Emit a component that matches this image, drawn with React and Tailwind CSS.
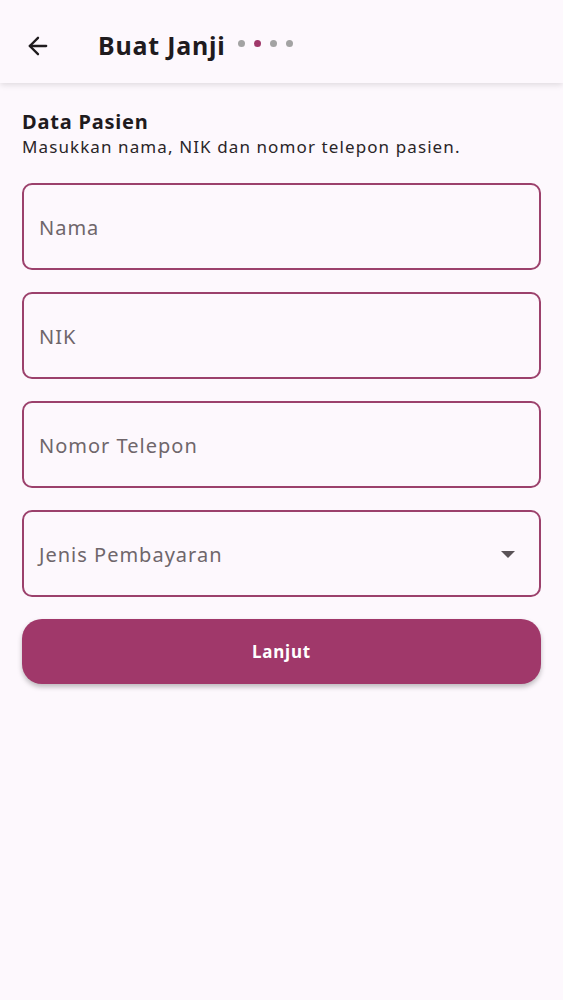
import { ArrowLeft } from 'lucide-react';

const fields = ['Nama', 'NIK', 'Nomor Telepon'];

export default function App() {
  return (
    <div className="min-h-[1000px] w-full bg-[#fdf8fd] font-['Noto_Sans',sans-serif] text-[#1f1b1e]">
      {/* Header */}
      <div className="flex h-[83px] items-center bg-[#fdf8fd] pl-[24px] pt-[8px] shadow-[0_2px_6px_rgba(0,0,0,0.12)]">
        <ArrowLeft className="h-[28px] w-[28px] text-[#1f1b1e]" strokeWidth={2} />
        <h1 className="ml-[46px] text-[25px] font-bold leading-none tracking-[0.8px]">Buat Janji</h1>
        <div className="ml-[12px] mt-[-4px] flex items-center gap-[9px]">
          <span className="h-[7px] w-[7px] rounded-full bg-[#a3a3a3]" />
          <span className="h-[7px] w-[7px] rounded-full bg-[#a0386a]" />
          <span className="h-[7px] w-[7px] rounded-full bg-[#a3a3a3]" />
          <span className="h-[7px] w-[7px] rounded-full bg-[#a3a3a3]" />
        </div>
      </div>

      {/* Content */}
      <div className="px-[22px] pt-[26px]">
        <h2 className="text-[20px] font-bold leading-[26px] tracking-[0.8px]">Data Pasien</h2>
        <p className="mt-[1px] text-[17px] leading-[22px] tracking-[1.1px] text-[#2a2528]">
          Masukkan nama, NIK dan nomor telepon pasien.
        </p>

        <div className="mt-[25px] flex flex-col gap-[22px]">
          {fields.map((f) => (
            <div
              key={f}
              className="flex h-[87px] items-center rounded-[10px] border-2 border-[#9c416c] px-[15px] pt-[2px]"
            >
              <span className="text-[20px] tracking-[1px] text-[#6f666b]">{f}</span>
            </div>
          ))}
          <div className="flex h-[87px] items-center justify-between rounded-[10px] border-2 border-[#9c416c] pl-[15px] pr-[24px] pt-[2px]">
            <span className="text-[20px] tracking-[1px] text-[#6f666b]">Jenis Pembayaran</span>
            <svg width="14" height="8" viewBox="0 0 14 8">
              <path d="M0 0 L14 0 L7 7 Z" fill="#5a5357" />
            </svg>
          </div>
        </div>

        <button className="mt-[22px] flex h-[65px] w-full items-center justify-center rounded-[20px] bg-[#a0386a] text-[17px] font-bold tracking-[0.8px] text-white shadow-[0_3px_5px_rgba(0,0,0,0.25)]">
          Lanjut
        </button>
      </div>
    </div>
  );
}
